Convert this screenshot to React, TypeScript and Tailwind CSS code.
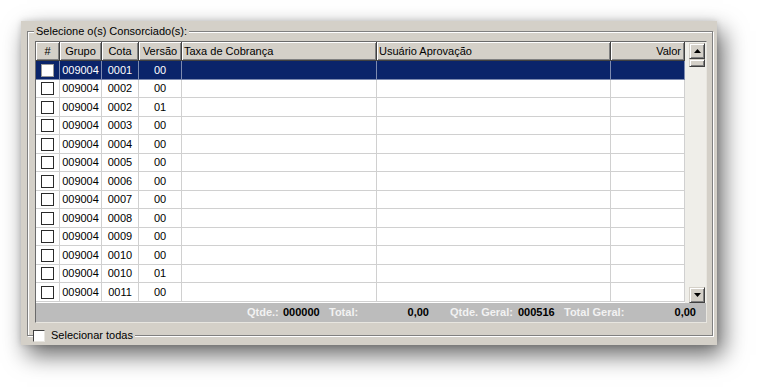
import React from "react";

const rows: [string, string, string][] = [
  ["009004", "0001", "00"],
  ["009004", "0002", "00"],
  ["009004", "0002", "01"],
  ["009004", "0003", "00"],
  ["009004", "0004", "00"],
  ["009004", "0005", "00"],
  ["009004", "0006", "00"],
  ["009004", "0007", "00"],
  ["009004", "0008", "00"],
  ["009004", "0009", "00"],
  ["009004", "0010", "00"],
  ["009004", "0010", "01"],
  ["009004", "0011", "00"],
];

function HeaderCell({ w, children, align }: { w: string; children?: React.ReactNode; align: "c" | "l" | "r" }) {
  const a = align === "c" ? "justify-center" : align === "l" ? "justify-start pl-[2px]" : "justify-end pr-[3px]";
  return (
    <div
      className={`${w} h-full flex items-center ${a} bg-[#d4d0c8] border-r border-b border-[#404040] shadow-[inset_1px_1px_0_#fff,inset_-1px_-1px_0_#808080] shrink-0`}
    >
      {children}
    </div>
  );
}

function ScrollButton({ up }: { up: boolean }) {
  return (
    <div className="w-[16px] h-[16px] bg-[#d4d0c8] border border-t-[#d4d0c8] border-l-[#d4d0c8] border-r-[#404040] border-b-[#404040] shadow-[inset_1px_1px_0_#fff,inset_-1px_-1px_0_#808080] flex items-center justify-center">
      <svg width="7" height="4" viewBox="0 0 7 4">
        {up ? <polygon points="3.5,0 7,4 0,4" fill="#000" /> : <polygon points="0,0 7,0 3.5,4" fill="#000" />}
      </svg>
    </div>
  );
}

export default function App() {
  return (
    <div className="w-[759px] h-[387px] bg-white overflow-hidden font-['Liberation_Sans',Arial,sans-serif] text-[11px] leading-[13px] text-black">
      <div className="ml-[21px] mt-[21px] w-[696px] h-[324px] bg-[#d4d0c8] shadow-[6px_10px_22px_rgba(0,0,0,0.6),0_0_6px_rgba(0,0,0,0.15)] pl-[6px] pt-[10px]">
        {/* Group box */}
        <div className="relative w-[686px] h-[305px] border border-[#808080] shadow-[1px_1px_0_#fff,inset_1px_1px_0_#fff]">
          <div className="absolute left-[6px] top-[-7px] px-[2px] bg-[#d4d0c8] whitespace-nowrap">
            Selecione o(s) Consorciado(s):
          </div>

          {/* Grid */}
          <div className="ml-[7px] mt-[9px] w-[672px] h-[282px] border border-[#6a6a6a] border-r-[#e8e6e0] border-b-[#e8e6e0] flex flex-col">
            <div className="flex h-[261px]">
              {/* table */}
              <div className="w-[649px] flex flex-col bg-white">
                <div className="flex h-[19px] shrink-0">
                  <HeaderCell w="w-[24px]" align="c">#</HeaderCell>
                  <HeaderCell w="w-[42px]" align="c">Grupo</HeaderCell>
                  <HeaderCell w="w-[37px]" align="c">Cota</HeaderCell>
                  <HeaderCell w="w-[43px]" align="c">Versão</HeaderCell>
                  <HeaderCell w="w-[195px]" align="l">Taxa de Cobrança</HeaderCell>
                  <HeaderCell w="w-[234px]" align="l">Usuário Aprovação</HeaderCell>
                  <HeaderCell w="w-[74px]" align="r">Valor</HeaderCell>
                </div>
                {rows.map((r, i) => {
                  const sel = i === 0;
                  const h = i % 2 === 0 ? "h-[19px]" : "h-[18px]";
                  const rowCls = sel ? "bg-[#0a246a] text-white" : "bg-white text-black";
                  const bc = sel ? "border-[#7d8bb0]" : "border-[#d0d0d0]";
                  const cell = `h-full border-r border-b ${bc} flex items-center shrink-0`;
                  return (
                    <div key={i} className={`flex ${h} shrink-0 ${rowCls}`}>
                      <div className={`${cell} w-[24px] justify-center`}>
                        <div
                          className={`w-[13px] h-[13px] bg-white border ${sel ? "border-[#9a9a9a]" : "border-[#2a2a2a]"}`}
                        />
                      </div>
                      <div className={`${cell} w-[42px] justify-center`}>{r[0]}</div>
                      <div className={`${cell} w-[37px] justify-center`}>{r[1]}</div>
                      <div className={`${cell} w-[43px] justify-center`}>{r[2]}</div>
                      <div className={`${cell} w-[195px]`} />
                      <div className={`${cell} w-[234px]`} />
                      <div className={`${cell} w-[74px]`} />
                    </div>
                  );
                })}
              </div>
              {/* scrollbar */}
              <div className="w-[21px] bg-[#efeee9] flex flex-col items-end pr-[1px] pt-[1px]">
                <ScrollButton up />
                <div className="w-[16px] h-[8px] bg-[#d4d0c8] border border-t-[#d4d0c8] border-l-[#d4d0c8] border-r-[#404040] border-b-[#404040] shadow-[inset_1px_1px_0_#fff,inset_-1px_-1px_0_#808080]" />
                <div className="flex-1" />
                <ScrollButton up={false} />
              </div>
            </div>
            {/* footer */}
            <div className="h-[19px] bg-[#bcbcbc] flex items-center font-bold whitespace-nowrap pl-[211px]">
              <div className="w-[36px] text-[#f2f2f2]">Qtde.:</div>
              <div className="w-[46px]">000000</div>
              <div className="w-[100px] flex justify-between">
                <span className="text-[#f2f2f2]">Total:</span>
                <span>0,00</span>
              </div>
              <div className="ml-[21px] w-[68px] text-[#f2f2f2]">Qtde. Geral:</div>
              <div className="w-[46px]">000516</div>
              <div className="w-[132px] flex justify-between">
                <span className="text-[#f2f2f2]">Total Geral:</span>
                <span>0,00</span>
              </div>
            </div>
          </div>

          <div className="absolute left-[5px] bottom-[-7px] pr-[2px] bg-[#d4d0c8] flex items-center gap-[6px] whitespace-nowrap">
            <div className="w-[12px] h-[12px] bg-white border border-t-[#404040] border-l-[#404040] border-r-[#e8e6e0] border-b-[#e8e6e0]" />
            <span>Selecionar todas</span>
          </div>
        </div>
      </div>
    </div>
  );
}
